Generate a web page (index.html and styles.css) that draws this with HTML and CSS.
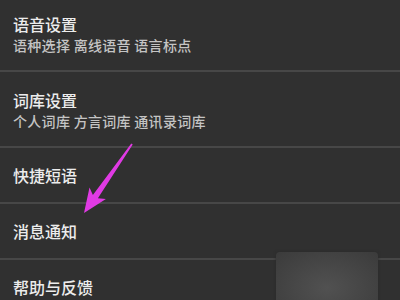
FILE: index.html
```html
<!DOCTYPE html>
<html lang="zh-CN">
<head>
<meta charset="utf-8">
<link rel="stylesheet" href="styles.css">
</head>
<body>
<div class="screen">
  <ul class="list">
    <li class="row row-two">
      <div class="title">语音设置</div>
      <div class="sub">语种选择 离线语音 语言标点</div>
    </li>
    <li class="row row-two">
      <div class="title">词库设置</div>
      <div class="sub">个人词库 方言词库 通讯录词库</div>
    </li>
    <li class="row row-one">
      <div class="title">快捷短语</div>
    </li>
    <li class="row row-one">
      <div class="title">消息通知</div>
    </li>
    <li class="row row-one">
      <div class="title">帮助与反馈</div>
    </li>
  </ul>
  <div class="smudge"></div>
  <svg class="arrow" width="400" height="300" viewBox="0 0 400 300">
    <polygon fill="#e03ae4" points="132.7,144.5 97.9,198.3 105.9,199 84,213 89.5,187.6 92.9,194.9 131.3,143.5"/>
  </svg>
</div>
</body>
</html>
```
FILE: styles.css
```css
html, body {
  margin: 0;
  padding: 0;
  background: #303030;
}
.screen {
  position: relative;
  width: 400px;
  height: 300px;
  overflow: hidden;
  background: #303030;
  font-family: "Noto Sans CJK SC", "Noto Sans", sans-serif;
}
.list {
  list-style: none;
  margin: -4px 0 0 0;
  padding: 0;
}
.row {
  border-bottom: 2px solid #474747;
  padding-left: 13px;
  box-sizing: border-box;
}
.row-two {
  height: 76px;
  padding-top: 18px;
}
.row-one {
  height: 56px;
  padding-top: 17px;
}
.title {
  font-size: 16px;
  line-height: 20px;
  font-weight: 500;
  color: #ececec;
}
.sub {
  font-size: 14px;
  line-height: 22px;
  font-weight: 500;
  letter-spacing: 0.3px;
  color: #c4c4c4;
  white-space: nowrap;
}
.smudge {
  position: absolute;
  left: 276px;
  top: 252px;
  width: 102px;
  height: 60px;
  border-radius: 4px;
  background: radial-gradient(ellipse at 50% 60%, #515151 0%, #474747 45%, #3b3b3b 100%);
  box-shadow: 0 0 3px #2a2a2a;
}
.arrow {
  position: absolute;
  left: 0;
  top: 0;
}
```
